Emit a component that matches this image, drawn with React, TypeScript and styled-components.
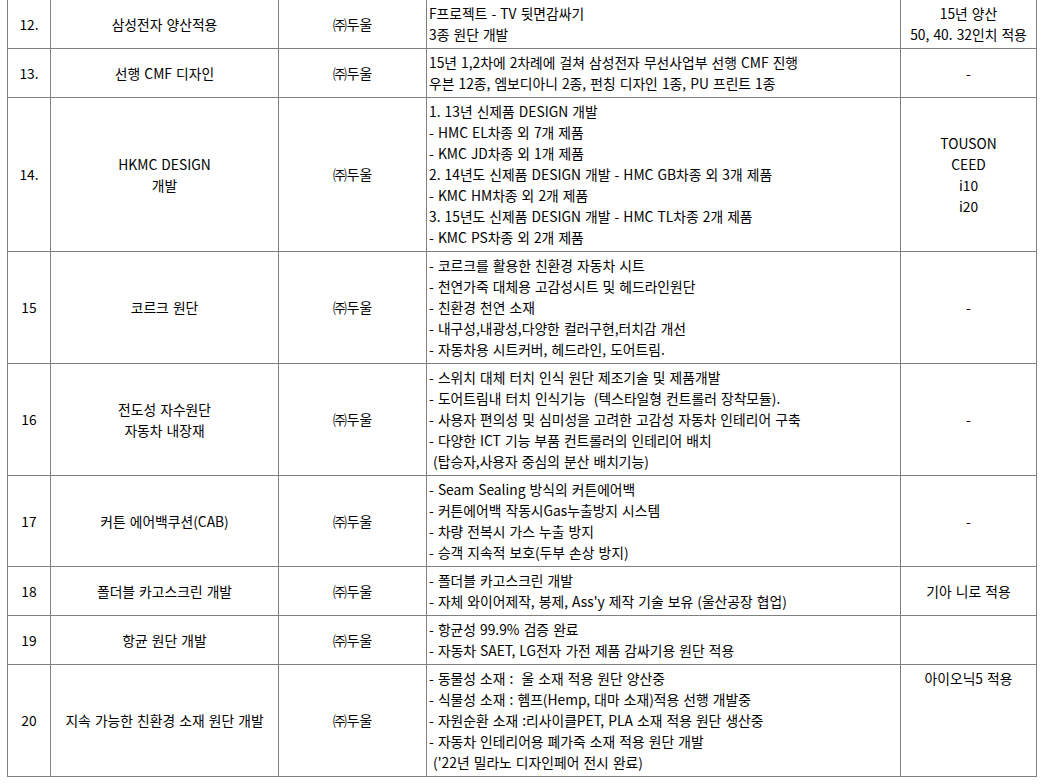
import React from 'react'
import styled, { createGlobalStyle } from 'styled-components'

const GlobalStyle = createGlobalStyle`
  html, body {
    margin: 0;
    padding: 0;
    background: #ffffff;
  }
  body {
    font-family: 'Noto Sans CJK KR', 'Noto Sans', sans-serif;
    font-size: 13.8px;
    word-spacing: 1px;
    color: #000000;
  }
`

const Sheet = styled.div`
  padding: 0 0 0 7px;
`

const Table = styled.table`
  border-collapse: collapse;
  table-layout: fixed;
  width: 1030px;
  border-left: 1px solid #000;
  border-right: 1px solid #000;
  border-bottom: 1px solid #000;
`

const Col = styled.col<{ $w: number }>`
  width: ${({ $w }) => $w}px;
`

const Row = styled.tr``

const Cell = styled.td<{ $align?: 'left' | 'center'; $valign?: 'top' | 'middle' }>`
  border: 1px solid #808080;
  padding: 3px 2px;
  line-height: 21px;
  text-align: ${({ $align }) => $align || 'center'};
  vertical-align: ${({ $valign }) => $valign || 'middle'};
  white-space: pre;
  overflow: hidden;

  tr:first-child > & {
    border-top: none;
  }
`

const Line = styled.div`
  height: 21px;
`

type Item = {
  no: string
  title: string[]
  desc: string[]
  note: string[]
  noteTop?: boolean
}

const columns = [43, 228, 148, 474, 136]

const rows: Item[] = [
  {
    no: '12.',
    title: ['삼성전자 양산적용'],
    desc: ['F프로젝트 - TV 뒷면감싸기', '3종 원단 개발'],
    note: ['15년 양산', '50, 40. 32인치 적용'],
  },
  {
    no: '13.',
    title: ['선행 CMF 디자인'],
    desc: [
      '15년 1,2차에 2차례에 걸쳐 삼성전자 무선사업부 선행 CMF 진행',
      '우븐 12종, 엠보디아니 2종, 펀칭 디자인 1종, PU 프린트 1종',
    ],
    note: ['-'],
  },
  {
    no: '14.',
    title: ['HKMC DESIGN', '개발'],
    desc: [
      '1. 13년 신제품 DESIGN 개발',
      '- HMC EL차종 외 7개 제품',
      '- KMC JD차종 외 1개 제품',
      '2. 14년도 신제품 DESIGN 개발 - HMC GB차종 외 3개 제품',
      '- KMC HM차종 외 2개 제품',
      '3. 15년도 신제품 DESIGN 개발 - HMC TL차종 2개 제품',
      '- KMC PS차종 외 2개 제품',
    ],
    note: ['TOUSON', 'CEED', 'i10', 'i20'],
  },
  {
    no: '15',
    title: ['코르크 원단'],
    desc: [
      '- 코르크를 활용한 친환경 자동차 시트',
      '- 천연가죽 대체용 고감성시트 및 헤드라인원단',
      '- 친환경 천연 소재',
      '- 내구성,내광성,다양한 컬러구현,터치감 개선',
      '- 자동차용 시트커버, 헤드라인, 도어트림.',
    ],
    note: ['-'],
  },
  {
    no: '16',
    title: ['전도성 자수원단', '자동차 내장재'],
    desc: [
      '- 스위치 대체 터치 인식 원단 제조기술 및 제품개발',
      '- 도어트림내 터치 인식기능  (텍스타일형 컨트롤러 장착모듈).',
      '- 사용자 편의성 및 심미성을 고려한 고감성 자동차 인테리어 구축',
      '- 다양한 ICT 기능 부품 컨트롤러의 인테리어 배치',
      ' (탑승자,사용자 중심의 분산 배치기능)',
    ],
    note: ['-'],
  },
  {
    no: '17',
    title: ['커튼 에어백쿠션(CAB)'],
    desc: [
      '- Seam Sealing 방식의 커튼에어백',
      '- 커튼에어백 작동시Gas누출방지 시스템',
      '- 차량 전복시 가스 누출 방지',
      '- 승객 지속적 보호(두부 손상 방지)',
    ],
    note: ['-'],
  },
  {
    no: '18',
    title: ['폴더블 카고스크린 개발'],
    desc: [
      '- 폴더블 카고스크린 개발',
      "- 자체 와이어제작, 봉제, Ass'y 제작 기술 보유 (울산공장 협업)",
    ],
    note: ['기아 니로 적용'],
  },
  {
    no: '19',
    title: ['항균 원단 개발'],
    desc: ['- 항균성 99.9% 검증 완료', '- 자동차 SAET, LG전자 가전 제품 감싸기용 원단 적용'],
    note: [],
  },
  {
    no: '20',
    title: ['지속 가능한 친환경 소재 원단 개발'],
    desc: [
      '- 동물성 소재 :  울 소재 적용 원단 양산중',
      '- 식물성 소재 : 헴프(Hemp, 대마 소재)적용 선행 개발중',
      '- 자원순환 소재 :리사이클PET, PLA 소재 적용 원단 생산중',
      '- 자동차 인테리어용 폐가죽 소재 적용 원단 개발',
      " ('22년 밀라노 디자인페어 전시 완료)",
    ],
    note: ['아이오닉5 적용'],
    noteTop: true,
  },
]

const lines = (list: string[]) => list.map((t, i) => <Line key={i}>{t}</Line>)

export default function App() {
  return (
    <>
      <GlobalStyle />
      <Sheet>
        <Table>
          <colgroup>
            {columns.map((w, i) => (
              <Col key={i} $w={w} />
            ))}
          </colgroup>
          <tbody>
            {rows.map((r) => (
              <Row key={r.no}>
                <Cell>{r.no}</Cell>
                <Cell>{lines(r.title)}</Cell>
                <Cell>㈜두울</Cell>
                <Cell $align="left">{lines(r.desc)}</Cell>
                <Cell $valign={r.noteTop ? 'top' : 'middle'}>{lines(r.note)}</Cell>
              </Row>
            ))}
          </tbody>
        </Table>
      </Sheet>
    </>
  )
}
